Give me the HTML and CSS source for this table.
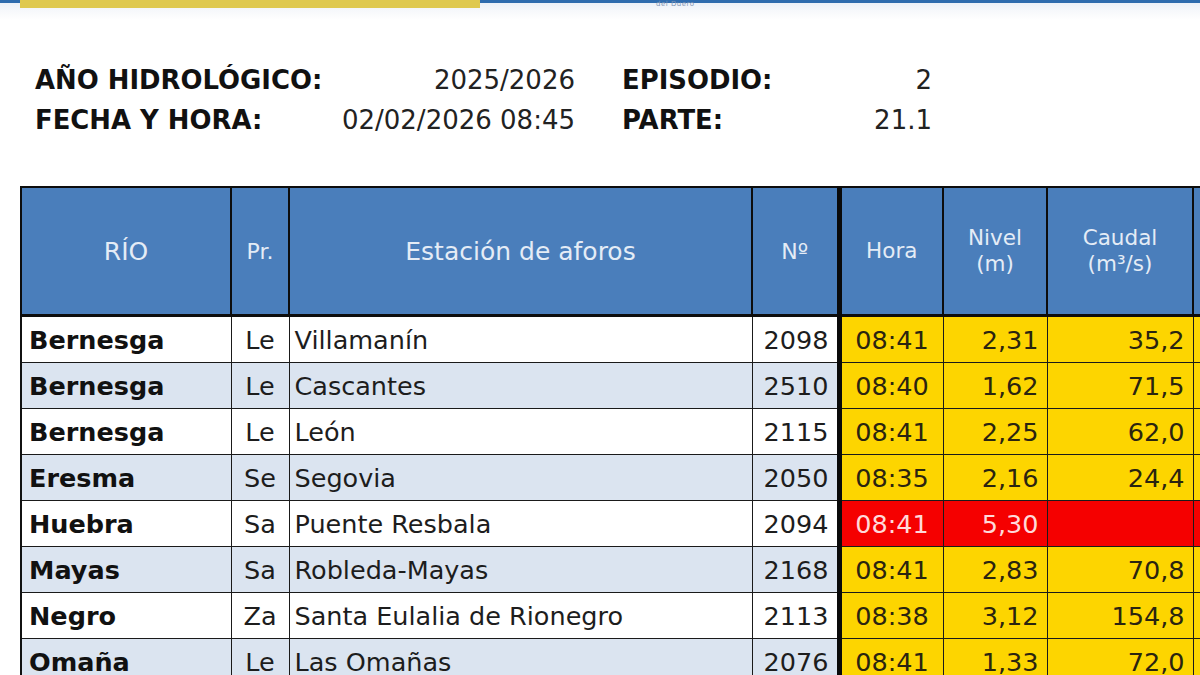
FILE: index.html
```html
<!DOCTYPE html>
<html lang="es">
<head>
<meta charset="utf-8">
<title>Parte hidrológico</title>
<link rel="stylesheet" href="styles.css">
</head>
<body>
<div class="topbar">
  <div class="topline"></div>
  <div class="yellow"></div>
  <div class="toptext">del Duero</div>
</div>

<div class="info">
  <div class="lbl">AÑO HIDROLÓGICO:</div>
  <div class="val">2025/2026</div>
  <div class="lbl2">EPISODIO:</div>
  <div class="val">2</div>
  <div class="lbl">FECHA Y HORA:</div>
  <div class="val">02/02/2026 08:45</div>
  <div class="lbl2">PARTE:</div>
  <div class="val">21.1</div>
</div>

<table class="tbl">
  <colgroup>
    <col class="c-rio"><col class="c-pr"><col class="c-est"><col class="c-no">
    <col class="c-hora"><col class="c-niv"><col class="c-cau"><col class="c-extra">
  </colgroup>
  <thead>
    <tr>
      <th class="big">RÍO</th>
      <th class="mid">Pr.</th>
      <th class="big">Estación de aforos</th>
      <th class="mid">Nº</th>
      <th class="sm sep">Hora</th>
      <th class="sm">Nivel<br>(m)</th>
      <th class="sm">Caudal<br>(m³/s)</th>
      <th class="sm"></th>
    </tr>
  </thead>
  <tbody>
    <tr>
      <td class="rio">Bernesga</td><td class="pr">Le</td><td class="est">Villamanín</td><td class="no">2098</td>
      <td class="y hora sep">08:41</td><td class="y num">2,31</td><td class="y num">35,2</td><td class="y"></td>
    </tr>
    <tr class="alt">
      <td class="rio">Bernesga</td><td class="pr">Le</td><td class="est">Cascantes</td><td class="no">2510</td>
      <td class="y hora sep">08:40</td><td class="y num">1,62</td><td class="y num">71,5</td><td class="y"></td>
    </tr>
    <tr>
      <td class="rio">Bernesga</td><td class="pr">Le</td><td class="est">León</td><td class="no">2115</td>
      <td class="y hora sep">08:41</td><td class="y num">2,25</td><td class="y num">62,0</td><td class="y"></td>
    </tr>
    <tr class="alt">
      <td class="rio">Eresma</td><td class="pr">Se</td><td class="est">Segovia</td><td class="no">2050</td>
      <td class="y hora sep">08:35</td><td class="y num">2,16</td><td class="y num">24,4</td><td class="y"></td>
    </tr>
    <tr>
      <td class="rio">Huebra</td><td class="pr">Sa</td><td class="est">Puente Resbala</td><td class="no">2094</td>
      <td class="r hora sep">08:41</td><td class="r num">5,30</td><td class="r num"></td><td class="r"></td>
    </tr>
    <tr class="alt">
      <td class="rio">Mayas</td><td class="pr">Sa</td><td class="est">Robleda-Mayas</td><td class="no">2168</td>
      <td class="y hora sep">08:41</td><td class="y num">2,83</td><td class="y num">70,8</td><td class="y"></td>
    </tr>
    <tr>
      <td class="rio">Negro</td><td class="pr">Za</td><td class="est">Santa Eulalia de Rionegro</td><td class="no">2113</td>
      <td class="y hora sep">08:38</td><td class="y num">3,12</td><td class="y num">154,8</td><td class="y"></td>
    </tr>
    <tr class="alt">
      <td class="rio">Omaña</td><td class="pr">Le</td><td class="est">Las Omañas</td><td class="no">2076</td>
      <td class="y hora sep">08:41</td><td class="y num">1,33</td><td class="y num">72,0</td><td class="y"></td>
    </tr>
  </tbody>
</table>
</body>
</html>
```
FILE: styles.css
```css
html, body {
  margin: 0;
  padding: 0;
  background: #ffffff;
  overflow: hidden;
  width: 1200px;
  height: 675px;
}
body {
  font-family: "DejaVu Sans", "Liberation Sans", sans-serif;
  color: #1a1a1a;
}

.topbar {
  position: relative;
  height: 20px;
  background: linear-gradient(to bottom, #e9eef6 0%, #f6f8fb 50%, #ffffff 100%);
}
.topline {
  height: 3px;
  background: #2f6cae;
}
.yellow {
  position: absolute;
  left: 20px;
  top: 0;
  width: 460px;
  height: 8px;
  background: #dfc94f;
}
.toptext {
  position: absolute;
  left: 656px;
  top: 0;
  font-size: 7px;
  line-height: 8px;
  color: #8094b4;
  letter-spacing: 0.5px;
}

.info {
  display: grid;
  grid-template-columns: 250px 290px 240px 117px;
  margin: 40px 0 0 35px;
  line-height: 40px;
  font-size: 26px;
  white-space: nowrap;
}
.info .lbl, .info .lbl2 {
  font-weight: bold;
  font-size: 25.9px;
  color: #111;
}
.info .lbl2 {
  padding-left: 47px;
}
.info .val {
  text-align: right;
  color: #222;
}

.tbl {
  margin: 46px 0 0 20px;
  border-collapse: collapse;
  table-layout: fixed;
  width: 1230px;
  border-top: 2px solid #111;
  border-left: 2px solid #111;
}
.c-rio { width: 210px; }
.c-pr { width: 58px; }
.c-est { width: 463px; }
.c-no { width: 87px; }
.c-hora { width: 104px; }
.c-niv { width: 104px; }
.c-cau { width: 146px; }
.c-extra { width: 58px; }

.tbl th {
  background: #4a7ebb;
  color: #e4ecf6;
  font-weight: normal;
  height: 126px;
  padding: 0;
  border: 2px solid #0d0d0d;
  border-bottom: 3px solid #0d0d0d;
  text-align: center;
  vertical-align: middle;
}
.tbl th.big { font-size: 25px; }
.tbl th.mid { font-size: 22px; }
.tbl th.sm { font-size: 21.5px; line-height: 26px; }

.tbl td {
  height: 45px;
  padding: 0 6px;
  border: 1.5px solid #1a1a1a;
  font-size: 25.5px;
  background: #ffffff;
  white-space: nowrap;
  color: #1d1d1d;
}
.tbl tr.alt td { background: #dbe4f0; }
.tbl td.rio { font-weight: bold; padding-left: 7px; color: #111; }
.tbl td.pr { text-align: center; padding: 0; }
.tbl td.est { padding-left: 5px; }
.tbl td.no { text-align: right; padding-right: 8px; }
.tbl .sep { border-left: 5px solid #0a0a0a; }
.tbl tr td.y { background: #fdd500; color: #2a2410; }
.tbl tr td.r { background: #f50000; color: #ffd9d9; }
.tbl td.hora { text-align: center; padding: 0; }
.tbl td.num { text-align: right; padding-right: 8px; }
```
